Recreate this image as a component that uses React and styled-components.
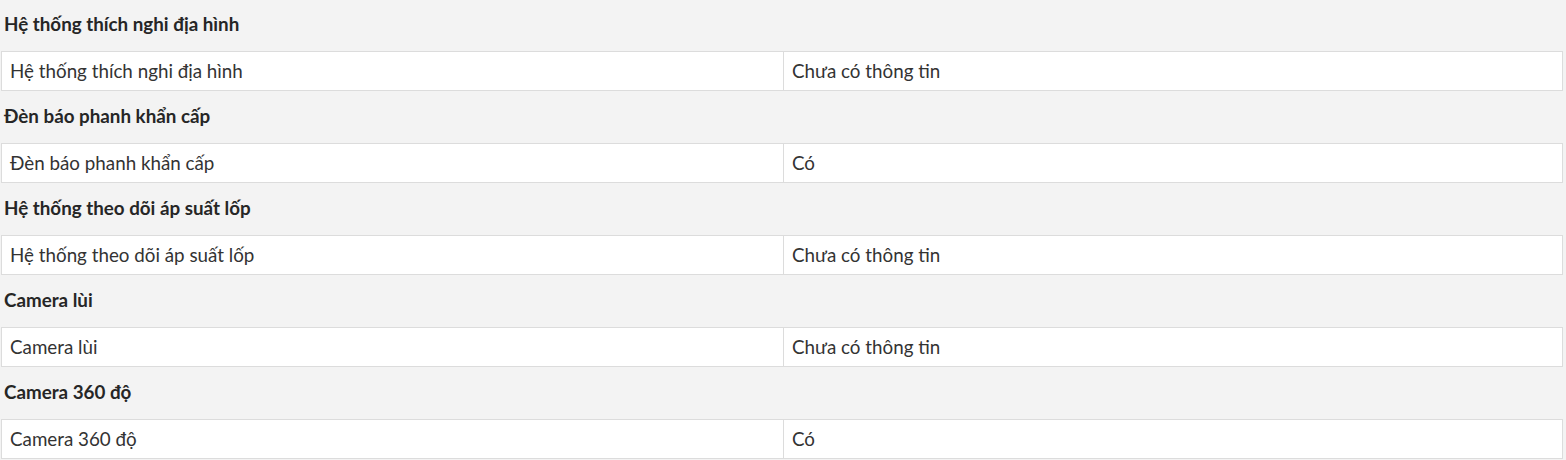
import React from "react";
import styled, { createGlobalStyle } from "styled-components";

const GlobalStyle = createGlobalStyle`
  html, body {
    margin: 0;
    padding: 0;
    background: #f3f3f3;
  }
  body {
    font-family: Lato, "Noto Sans", sans-serif;
    color: #333;
  }
`;

const Page = styled.div`
  width: 1566px;
  margin-top: -1px;
`;

const Section = styled.section`
  display: flex;
  flex-direction: column;
`;

const Heading = styled.h3`
  margin: 0;
  height: 52px;
  box-sizing: border-box;
  display: flex;
  align-items: center;
  padding: 0 0 3px 4px;
  font-size: 18.8px;
  font-weight: 700;
  color: #262626;
`;

const Table = styled.div`
  display: grid;
  grid-template-columns: 781px 781px;
  margin-left: 1px;
  width: 1562px;
  background: #fff;
  border: 1px solid #dcdcdc;
  box-sizing: border-box;
  height: 40px;
`;

const Cell = styled.div`
  display: flex;
  align-items: center;
  padding: 0 0 1px 8px;
  font-size: 18.8px;
  color: #333;
  border-left: ${(p) => (p.$value ? "1px solid #dcdcdc" : "none")};
`;

const rows = [
  ["Hệ thống thích nghi địa hình", "Chưa có thông tin"],
  ["Đèn báo phanh khẩn cấp", "Có"],
  ["Hệ thống theo dõi áp suất lốp", "Chưa có thông tin"],
  ["Camera lùi", "Chưa có thông tin"],
  ["Camera 360 độ", "Có"],
];

export default function App() {
  return (
    <Page>
      <GlobalStyle />
      {rows.map(([name, value]) => (
        <Section key={name}>
          <Heading>{name}</Heading>
          <Table>
            <Cell>{name}</Cell>
            <Cell $value>{value}</Cell>
          </Table>
        </Section>
      ))}
    </Page>
  );
}
